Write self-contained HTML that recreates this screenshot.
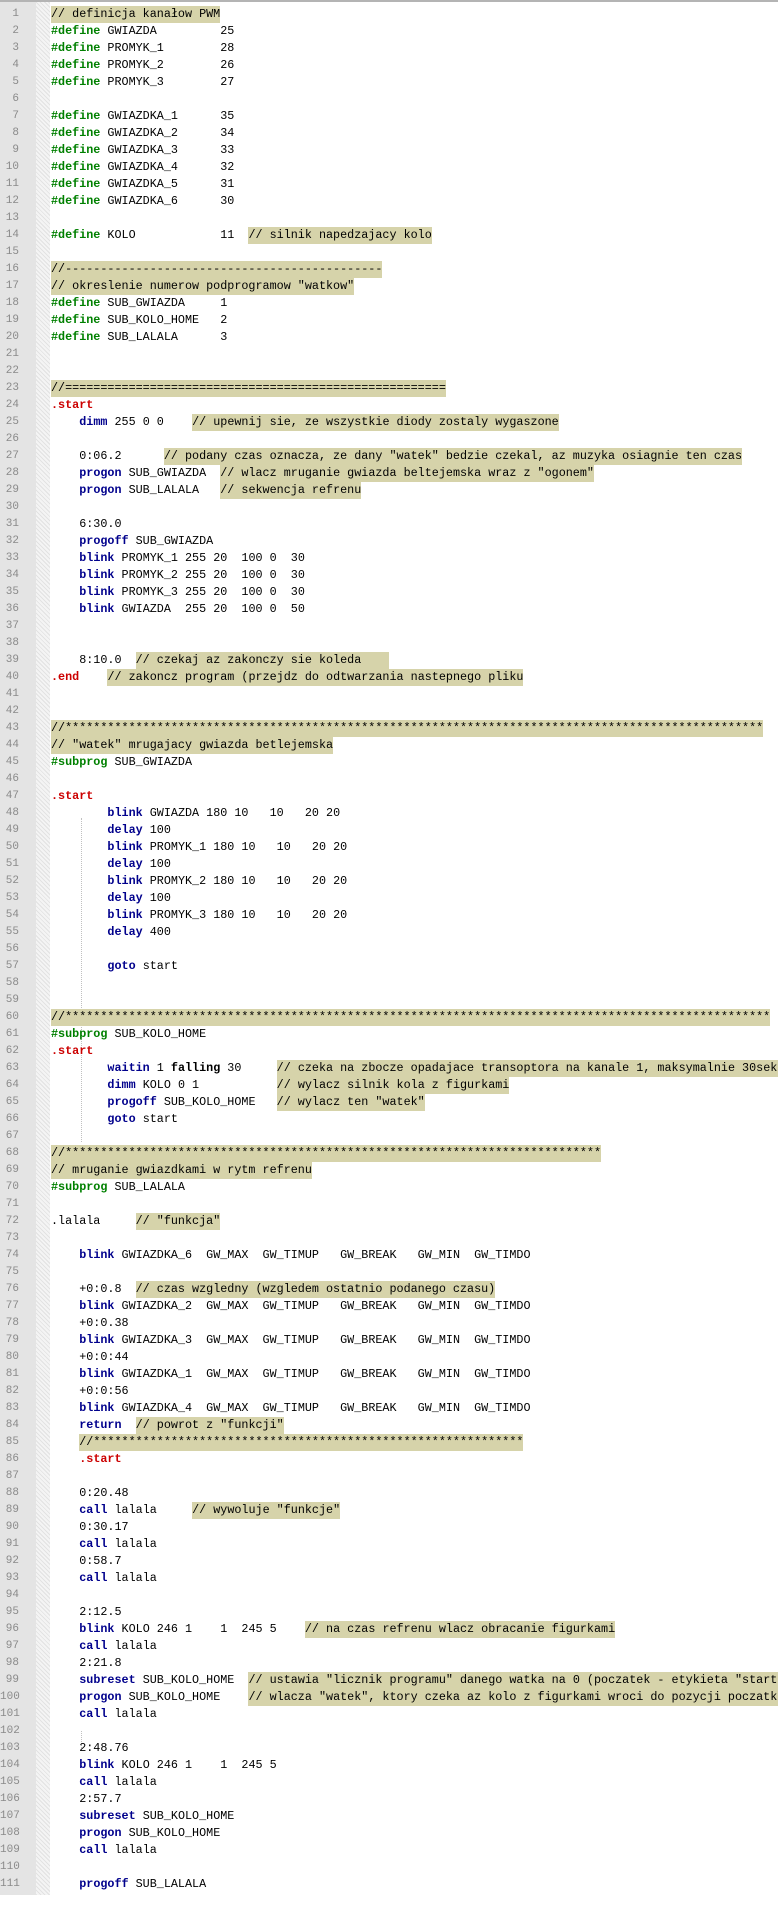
<!DOCTYPE html>
<html><head><meta charset="utf-8">
<style>
html,body{margin:0;padding:0;background:#fff;width:778px;height:1915px;overflow:hidden;position:relative}
#topb{position:absolute;left:0;top:0;width:778px;height:2px;background:#b4b4b4}
#gut{position:absolute;left:0;top:2px;width:36px;height:1893px;background:#e4e4e4}
#hatch{position:absolute;left:36px;top:2px;width:14px;height:1893px;background-color:#f4f4f4;background-image:repeating-linear-gradient(45deg,#e2e2e2 0 1px,transparent 1px 3px)}
#nums{position:absolute;left:0;top:6px;width:19px;text-align:right;font:11px/17px "Liberation Mono",monospace;color:#8a8a8a;white-space:pre}
#code{position:absolute;left:51px;top:6px;font:11.75px/17px "Liberation Mono",monospace;color:#000;white-space:normal}
#code div{height:17px;white-space:pre}
.c{background:#d6d3aa;display:inline-block;height:17px;vertical-align:top}
.k{color:#00008c;font-weight:bold}
.d{color:#008000;font-weight:bold}
.s{color:#cc0000;font-weight:bold}
.b{font-weight:bold}
.g1{position:absolute;left:81px;top:818px;height:324px;border-left:1px dotted #c0c0c0}
.g2{position:absolute;left:81px;top:1731px;height:17px;border-left:1px dotted #c0c0c0}
</style></head><body>
<div id="topb"></div><div id="gut"></div><div id="hatch"></div>
<div class="g1"></div><div class="g2"></div>
<div id="nums">1
2
3
4
5
6
7
8
9
10
11
12
13
14
15
16
17
18
19
20
21
22
23
24
25
26
27
28
29
30
31
32
33
34
35
36
37
38
39
40
41
42
43
44
45
46
47
48
49
50
51
52
53
54
55
56
57
58
59
60
61
62
63
64
65
66
67
68
69
70
71
72
73
74
75
76
77
78
79
80
81
82
83
84
85
86
87
88
89
90
91
92
93
94
95
96
97
98
99
100
101
102
103
104
105
106
107
108
109
110
111</div>
<div id="code"><div><span class="c">// definicja kanałow PWM</span></div><div><span class="d">#define</span> GWIAZDA         25</div><div><span class="d">#define</span> PROMYK_1        28</div><div><span class="d">#define</span> PROMYK_2        26</div><div><span class="d">#define</span> PROMYK_3        27</div><div></div><div><span class="d">#define</span> GWIAZDKA_1      35</div><div><span class="d">#define</span> GWIAZDKA_2      34</div><div><span class="d">#define</span> GWIAZDKA_3      33</div><div><span class="d">#define</span> GWIAZDKA_4      32</div><div><span class="d">#define</span> GWIAZDKA_5      31</div><div><span class="d">#define</span> GWIAZDKA_6      30</div><div></div><div><span class="d">#define</span> KOLO            11  <span class="c">// silnik napedzajacy kolo</span></div><div></div><div><span class="c">//---------------------------------------------</span></div><div><span class="c">// okreslenie numerow podprogramow "watkow"</span></div><div><span class="d">#define</span> SUB_GWIAZDA     1</div><div><span class="d">#define</span> SUB_KOLO_HOME   2</div><div><span class="d">#define</span> SUB_LALALA      3</div><div></div><div></div><div><span class="c">//======================================================</span></div><div><span class="s">.start</span></div><div>    <span class="k">dimm</span> 255 0 0    <span class="c">// upewnij sie, ze wszystkie diody zostaly wygaszone</span></div><div></div><div>    0:06.2      <span class="c">// podany czas oznacza, ze dany "watek" bedzie czekal, az muzyka osiagnie ten czas</span></div><div>    <span class="k">progon</span> SUB_GWIAZDA  <span class="c">// wlacz mruganie gwiazda beltejemska wraz z "ogonem"</span></div><div>    <span class="k">progon</span> SUB_LALALA   <span class="c">// sekwencja refrenu</span></div><div></div><div>    6:30.0</div><div>    <span class="k">progoff</span> SUB_GWIAZDA</div><div>    <span class="k">blink</span> PROMYK_1 255 20  100 0  30</div><div>    <span class="k">blink</span> PROMYK_2 255 20  100 0  30</div><div>    <span class="k">blink</span> PROMYK_3 255 20  100 0  30</div><div>    <span class="k">blink</span> GWIAZDA  255 20  100 0  50</div><div></div><div></div><div>    8:10.0  <span class="c">// czekaj az zakonczy sie koleda    </span></div><div><span class="s">.end</span>    <span class="c">// zakoncz program (przejdz do odtwarzania nastepnego pliku</span></div><div></div><div></div><div><span class="c">//***************************************************************************************************</span></div><div><span class="c">// "watek" mrugajacy gwiazda betlejemska</span></div><div><span class="d">#subprog</span> SUB_GWIAZDA</div><div></div><div><span class="s">.start</span></div><div>        <span class="k">blink</span> GWIAZDA 180 10   10   20 20</div><div>        <span class="k">delay</span> 100</div><div>        <span class="k">blink</span> PROMYK_1 180 10   10   20 20</div><div>        <span class="k">delay</span> 100</div><div>        <span class="k">blink</span> PROMYK_2 180 10   10   20 20</div><div>        <span class="k">delay</span> 100</div><div>        <span class="k">blink</span> PROMYK_3 180 10   10   20 20</div><div>        <span class="k">delay</span> 400</div><div></div><div>        <span class="k">goto</span> start</div><div></div><div></div><div><span class="c">//****************************************************************************************************</span></div><div><span class="d">#subprog</span> SUB_KOLO_HOME</div><div><span class="s">.start</span></div><div>        <span class="k">waitin</span> 1 <span class="b">falling</span> 30     <span class="c">// czeka na zbocze opadajace transoptora na kanale 1, maksymalnie 30sekund</span></div><div>        <span class="k">dimm</span> KOLO 0 1           <span class="c">// wylacz silnik kola z figurkami</span></div><div>        <span class="k">progoff</span> SUB_KOLO_HOME   <span class="c">// wylacz ten "watek"</span></div><div>        <span class="k">goto</span> start</div><div></div><div><span class="c">//****************************************************************************</span></div><div><span class="c">// mruganie gwiazdkami w rytm refrenu</span></div><div><span class="d">#subprog</span> SUB_LALALA</div><div></div><div>.lalala     <span class="c">// "funkcja"</span></div><div></div><div>    <span class="k">blink</span> GWIAZDKA_6  GW_MAX  GW_TIMUP   GW_BREAK   GW_MIN  GW_TIMDO</div><div></div><div>    +0:0.8  <span class="c">// czas wzgledny (wzgledem ostatnio podanego czasu)</span></div><div>    <span class="k">blink</span> GWIAZDKA_2  GW_MAX  GW_TIMUP   GW_BREAK   GW_MIN  GW_TIMDO</div><div>    +0:0.38</div><div>    <span class="k">blink</span> GWIAZDKA_3  GW_MAX  GW_TIMUP   GW_BREAK   GW_MIN  GW_TIMDO</div><div>    +0:0:44</div><div>    <span class="k">blink</span> GWIAZDKA_1  GW_MAX  GW_TIMUP   GW_BREAK   GW_MIN  GW_TIMDO</div><div>    +0:0:56</div><div>    <span class="k">blink</span> GWIAZDKA_4  GW_MAX  GW_TIMUP   GW_BREAK   GW_MIN  GW_TIMDO</div><div>    <span class="k">return</span>  <span class="c">// powrot z "funkcji"</span></div><div>    <span class="c">//*************************************************************</span></div><div>    <span class="s">.start</span></div><div></div><div>    0:20.48</div><div>    <span class="k">call</span> lalala     <span class="c">// wywoluje "funkcje"</span></div><div>    0:30.17</div><div>    <span class="k">call</span> lalala</div><div>    0:58.7</div><div>    <span class="k">call</span> lalala</div><div></div><div>    2:12.5</div><div>    <span class="k">blink</span> KOLO 246 1    1  245 5    <span class="c">// na czas refrenu wlacz obracanie figurkami</span></div><div>    <span class="k">call</span> lalala</div><div>    2:21.8</div><div>    <span class="k">subreset</span> SUB_KOLO_HOME  <span class="c">// ustawia "licznik programu" danego watka na 0 (poczatek - etykieta "start")</span></div><div>    <span class="k">progon</span> SUB_KOLO_HOME    <span class="c">// wlacza "watek", ktory czeka az kolo z figurkami wroci do pozycji poczatkowej</span></div><div>    <span class="k">call</span> lalala</div><div></div><div>    2:48.76</div><div>    <span class="k">blink</span> KOLO 246 1    1  245 5</div><div>    <span class="k">call</span> lalala</div><div>    2:57.7</div><div>    <span class="k">subreset</span> SUB_KOLO_HOME</div><div>    <span class="k">progon</span> SUB_KOLO_HOME</div><div>    <span class="k">call</span> lalala</div><div></div><div>    <span class="k">progoff</span> SUB_LALALA</div></div>
</body></html>
